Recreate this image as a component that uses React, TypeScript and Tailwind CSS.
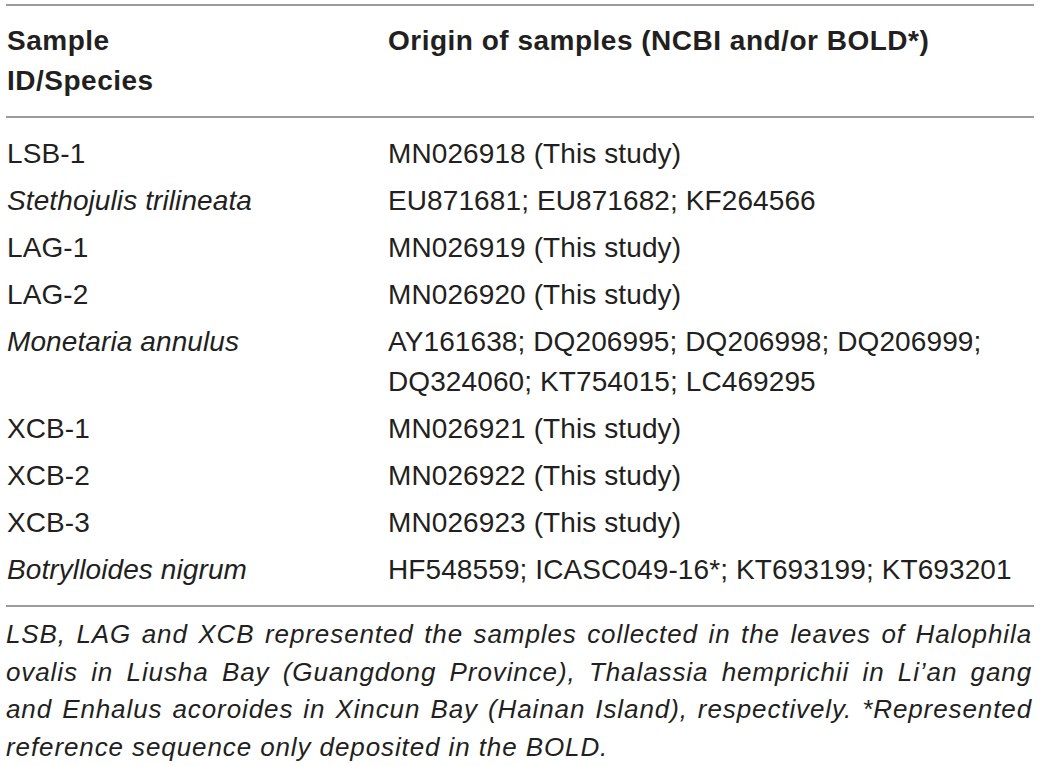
const rows: { id: string; italic?: boolean; origin: string[] }[] = [
  { id: "LSB-1", origin: ["MN026918 (This study)"] },
  { id: "Stethojulis trilineata", italic: true, origin: ["EU871681; EU871682; KF264566"] },
  { id: "LAG-1", origin: ["MN026919 (This study)"] },
  { id: "LAG-2", origin: ["MN026920 (This study)"] },
  {
    id: "Monetaria annulus",
    italic: true,
    origin: ["AY161638; DQ206995; DQ206998; DQ206999;", "DQ324060; KT754015; LC469295"],
  },
  { id: "XCB-1", origin: ["MN026921 (This study)"] },
  { id: "XCB-2", origin: ["MN026922 (This study)"] },
  { id: "XCB-3", origin: ["MN026923 (This study)"] },
  { id: "Botrylloides nigrum", italic: true, origin: ["HF548559; ICASC049-16*; KT693199; KT693201"] },
];

// footnote lines break where the printed table breaks them
const note = [
  "LSB, LAG and XCB represented the samples collected in the leaves of Halophila",
  "ovalis in Liusha Bay (Guangdong Province), Thalassia hemprichii in Li’an gang",
  "and Enhalus acoroides in Xincun Bay (Hainan Island), respectively. *Represented",
];

export default function App() {
  return (
    <div className="w-[1041px] h-[766px] overflow-hidden bg-white text-[#231f20] font-['Liberation_Sans',Arial,sans-serif]">
      <div className="ml-[6px] w-[1028px] pt-[4px]">
        <div className="h-[2px] bg-[#9c9c9c]" />

        {/* header */}
        <div className="grid grid-cols-[382px_1fr] pt-[15px] pb-[15px] text-[28px] leading-[40px] font-bold tracking-[0.5px]">
          <div className="pl-[1px]">
            Sample
            <br />
            ID/Species
          </div>
          <div>Origin of samples (NCBI and/or BOLD*)</div>
        </div>

        <div className="h-[2px] bg-[#9c9c9c]" />

        {/* body */}
        <div className="pt-[9px] pb-[15px] text-[28px] leading-[40px] tracking-[0.1px]">
          {rows.map((r) => (
            <div key={r.id} className="grid grid-cols-[382px_1fr] pt-[7px]">
              <div className={r.italic ? "pl-[1px] italic" : "pl-[1px]"}>{r.id}</div>
              <div>
                {r.origin.map((line) => (
                  <div key={line}>{line}</div>
                ))}
              </div>
            </div>
          ))}
        </div>

        <div className="h-[2px] bg-[#9c9c9c]" />

        {/* footnote */}
        <div className="pt-[9px] w-[1026px] text-[26px] leading-[37.5px] italic tracking-[0.9px]">
          {note.map((line) => (
            <p key={line} className="whitespace-nowrap text-justify [text-align-last:justify]">
              {line}
            </p>
          ))}
          <p>reference sequence only deposited in the BOLD.</p>
        </div>
      </div>
    </div>
  );
}
